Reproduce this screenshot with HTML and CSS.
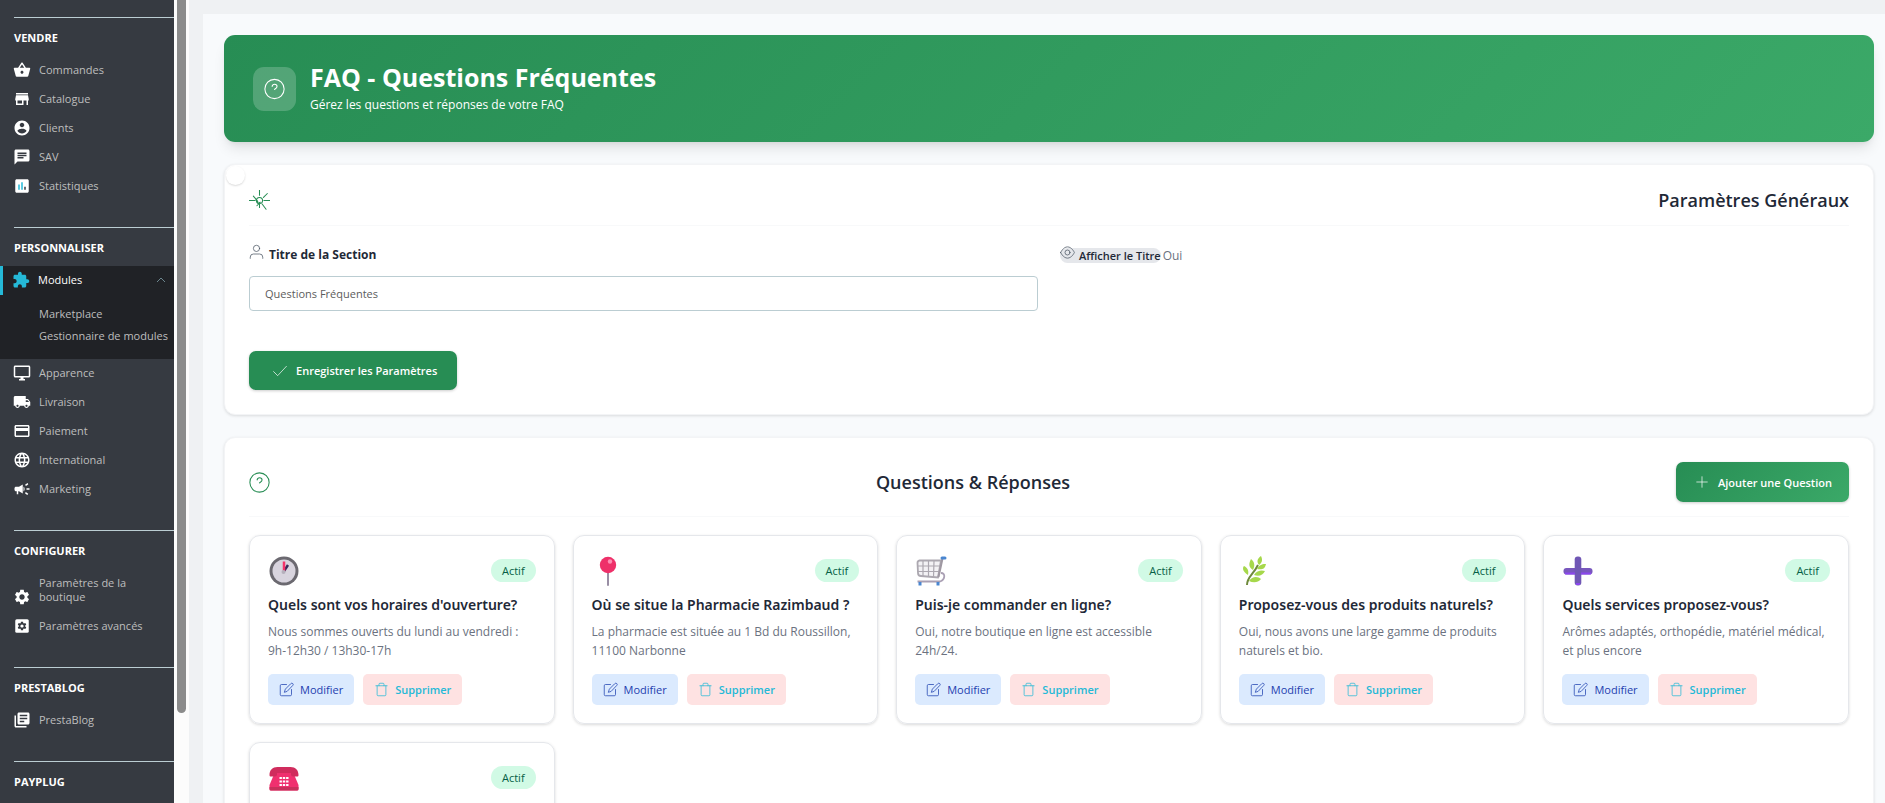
FILE: index.html
```html
<!DOCTYPE html>
<html lang="fr">
<head>
  <meta charset="UTF-8">
  <meta name="viewport" content="width=device-width, initial-scale=1.0">
  <title>FAQ - Questions Fréquentes</title>
  <link rel="stylesheet" href="styles.css">
</head>
<body>
  <!-- Shared icons -->
  <svg class="sprite" aria-hidden="true">
    <symbol id="i-help" viewBox="0 0 24 24">
      <circle cx="12" cy="12" r="11"/>
      <path d="M9.3 9c.2-1.6 1.3-2.5 2.8-2.5 1.600 0 2.800 1 2.800 2.500 0 1.700-1.400 2.400-2.900 3.500"/>
    </symbol>
    <symbol id="i-edit" viewBox="0 0 24 24">
      <path d="M12 4H4a2 2 0 0 0-2 2v14a2 2 0 0 0 2 2h14a2 2 0 0 0 2-2v-8"/>
      <path d="M19 2.500a2.100 2.100 0 0 1 3 3L13 15l-4.500 1.500L10 12z"/>
    </symbol>
    <symbol id="i-trash" viewBox="0 0 24 24">
      <path d="M3 6h18M5 6v14.500a1.500 1.500 0 0 0 1.500 1.500h11a1.500 1.500 0 0 0 1.500-1.500V6M8 6V3.500A1.500 1.500 0 0 1 9.500 2h5A1.500 1.500 0 0 1 16 3.500V6"/>
    </symbol>
  </svg>

  <div class="layout">
    <nav class="sidebar">
      <section class="nav-group">
        <h2>Vendre</h2>
        <ul>
          <li><a href="#"><svg viewBox="0 0 24 24"><path d="M17.21 9l-4.380-6.560c-.19-.28-.51-.42-.83-.42-.32 0-.64.14-.83.43L6.790 9H2c-.55 0-1 .45-1 1 0 .09.01.18.04.27l2.540 9.270c.23.84 1 1.460 1.920 1.460h13c.92 0 1.690-.62 1.930-1.460l2.540-9.270L23 10c0-.55-.45-1-1-1h-4.790zM9 9l3-4.400L15 9H9zm3 8c-1.100 0-2-.9-2-2s.9-2 2-2 2 .9 2 2-.9 2-2 2z"/></svg>Commandes</a></li>
          <li><a href="#"><svg viewBox="0 0 24 24"><path d="M20 4H4v2h16V4zm1 10v-2l-1-5H4l-1 5v2h1v6h10v-6h4v6h2v-6h1zm-9 4H6v-4h6v4z"/></svg>Catalogue</a></li>
          <li><a href="#"><svg viewBox="0 0 24 24"><path d="M12 2C6.480 2 2 6.480 2 12s4.480 10 10 10 10-4.480 10-10S17.520 2 12 2zm0 3c1.660 0 3 1.340 3 3s-1.340 3-3 3-3-1.340-3-3 1.340-3 3-3zm0 14.200c-2.500 0-4.710-1.280-6-3.220.03-1.990 4-3.080 6-3.080 1.990 0 5.970 1.090 6 3.080-1.290 1.940-3.500 3.220-6 3.220z"/></svg>Clients</a></li>
          <li><a href="#"><svg viewBox="0 0 24 24"><path d="M20 2H4c-1.100 0-1.990.9-1.990 2L2 22l4-4h14c1.100 0 2-.9 2-2V4c0-1.100-.9-2-2-2zM6 9h12v2H6V9zm8 5H6v-2h8v2zm4-6H6V6h12v2z"/></svg>SAV</a></li>
          <li><a href="#"><svg viewBox="0 0 24 24"><path d="M19 3H5c-1.100 0-2 .9-2 2v14c0 1.100.9 2 2 2h14c1.100 0 2-.9 2-2V5c0-1.100-.9-2-2-2z"/><path fill="#25b9d7" d="M7 10h2v7H7zM11 7h2v10h-2z"/><path fill="#363a41" d="M15 13h2v4h-2z"/></svg>Statistiques</a></li>
        </ul>
      </section>

      <section class="nav-group">
        <h2>Personnaliser</h2>
        <ul>
          <li class="active">
            <a href="#"><svg viewBox="0 0 24 24"><path d="M20.500 11H19V7c0-1.100-.9-2-2-2h-4V3.500C13 2.120 11.880 1 10.500 1S8 2.120 8 3.500V5H4c-1.100 0-1.990.9-1.990 2v3.800H3.500c1.490 0 2.700 1.210 2.700 2.700s-1.210 2.700-2.700 2.700H2V20c0 1.100.9 2 2 2h3.800v-1.500c0-1.490 1.210-2.700 2.700-2.700 1.490 0 2.700 1.210 2.700 2.700V22H17c1.100 0 2-.9 2-2v-4h1.500c1.380 0 2.500-1.120 2.500-2.500S21.880 11 20.500 11z"/></svg>Modules<svg class="chevron" viewBox="0 0 10 10"><path d="M1 7l4-4 4 4"/></svg></a>
            <ul class="submenu">
              <li><a href="#">Marketplace</a></li>
              <li><a href="#">Gestionnaire de modules</a></li>
            </ul>
          </li>
          <li><a href="#"><svg viewBox="0 0 24 24"><path d="M21 2H3c-1.100 0-2 .9-2 2v12c0 1.100.9 2 2 2h7v2H8v2h8v-2h-2v-2h7c1.100 0 2-.9 2-2V4c0-1.100-.9-2-2-2zm0 14H3V4h18v12z"/></svg>Apparence</a></li>
          <li><a href="#"><svg viewBox="0 0 24 24"><path d="M20 8h-3V4H3c-1.100 0-2 .9-2 2v11h2c0 1.660 1.340 3 3 3s3-1.340 3-3h6c0 1.660 1.340 3 3 3s3-1.340 3-3h2v-5l-3-4zM6 18.500c-.83 0-1.500-.67-1.500-1.500s.67-1.500 1.500-1.500 1.500.67 1.500 1.500-.67 1.500-1.500 1.500zm13.500-9l1.960 2.500H17V9.500h2.500zm-1.500 9c-.83 0-1.500-.67-1.500-1.500s.67-1.500 1.500-1.500 1.500.67 1.500 1.500-.67 1.500-1.500 1.500z"/></svg>Livraison</a></li>
          <li><a href="#"><svg viewBox="0 0 24 24"><path d="M20 4H4c-1.110 0-1.990.89-1.990 2L2 18c0 1.110.89 2 2 2h16c1.110 0 2-.89 2-2V6c0-1.110-.89-2-2-2zm0 14H4v-6h16v6zm0-10H4V6h16v2z"/></svg>Paiement</a></li>
          <li><a href="#"><svg viewBox="0 0 24 24"><path d="M11.990 2C6.470 2 2 6.480 2 12s4.470 10 9.990 10C17.520 22 22 17.520 22 12S17.520 2 11.990 2zm6.930 6h-2.950c-.32-1.250-.78-2.450-1.380-3.560 1.840.63 3.370 1.910 4.330 3.560zM12 4.040c.83 1.200 1.480 2.530 1.910 3.960h-3.820c.43-1.430 1.080-2.760 1.910-3.960zM4.260 14C4.100 13.360 4 12.690 4 12s.1-1.360.26-2h3.380c-.08.66-.14 1.320-.14 2 0 .68.06 1.340.14 2H4.260zm.82 2h2.950c.32 1.250.78 2.450 1.380 3.560-1.840-.63-3.370-1.900-4.330-3.560zm2.950-8H5.080c.96-1.660 2.490-2.930 4.330-3.560C8.810 5.550 8.350 6.750 8.030 8zM12 19.960c-.83-1.200-1.480-2.530-1.910-3.960h3.820c-.43 1.430-1.080 2.760-1.910 3.960zM14.340 14H9.660c-.09-.66-.16-1.320-.16-2 0-.68.07-1.350.16-2h4.680c.09.65.16 1.320.16 2 0 .68-.07 1.340-.16 2zm.25 5.560c.6-1.110 1.060-2.310 1.380-3.560h2.950c-.96 1.650-2.490 2.930-4.330 3.560zM16.360 14c.08-.66.14-1.320.14-2 0-.68-.06-1.340-.14-2h3.380c.16.64.26 1.310.26 2s-.1 1.360-.26 2h-3.380z"/></svg>International</a></li>
          <li><a href="#"><svg viewBox="0 0 24 24"><path d="M18 11v2h4v-2h-4zm-2 6.610c.96.71 2.210 1.650 3.200 2.390.4-.53.8-1.070 1.200-1.600-.99-.74-2.240-1.680-3.200-2.400-.4.54-.8 1.080-1.200 1.610zM20.400 5.600c-.4-.53-.8-1.070-1.200-1.600-.99.74-2.240 1.680-3.200 2.400.4.53.8 1.070 1.200 1.600.96-.72 2.210-1.650 3.200-2.400zM4 9c-1.100 0-2 .9-2 2v2c0 1.100.9 2 2 2h1v4h2v-4h1l5 3V6L8 9H4zm11.500 3c0-1.330-.58-2.530-1.500-3.350v6.690c.92-.81 1.500-2.010 1.500-3.340z"/></svg>Marketing</a></li>
        </ul>
      </section>

      <section class="nav-group">
        <h2>Configurer</h2>
        <ul>
          <li><a href="#"><svg viewBox="0 0 24 24"><path id="gear" d="M19.140 12.940c.04-.3.06-.61.06-.94 0-.32-.02-.64-.07-.94l2.030-1.580c.18-.14.23-.41.12-.61l-1.920-3.320c-.12-.22-.37-.29-.59-.22l-2.390.96c-.5-.38-1.030-.7-1.620-.94l-.36-2.540c-.04-.24-.24-.41-.48-.41h-3.840c-.24 0-.43.17-.47.41l-.36 2.540c-.59.24-1.130.57-1.620.94l-2.390-.96c-.22-.08-.47 0-.59.22L2.740 8.870c-.12.21-.08.47.12.61l2.030 1.580c-.05.3-.09.63-.09.94s.02.64.07.94l-2.030 1.580c-.18.14-.23.41-.12.61l1.920 3.320c.12.22.37.29.59.22l2.390-.96c.5.38 1.030.7 1.620.94l.36 2.540c.05.24.24.41.48.41h3.840c.24 0 .44-.17.47-.41l.36-2.540c.59-.24 1.130-.56 1.620-.94l2.390.96c.22.08.47 0 .59-.22l1.920-3.320c.12-.22.07-.47-.12-.61l-2.010-1.580zM12 15.600c-1.980 0-3.600-1.620-3.600-3.600s1.620-3.600 3.600-3.600 3.600 1.620 3.600 3.600-1.620 3.600-3.600 3.600z"/></svg><span>Paramètres de la boutique</span></a></li>
          <li><a href="#"><svg viewBox="0 0 24 24"><rect x="3" y="3" width="18" height="18" rx="2"/><use href="#gear" fill="#363a41" transform="translate(4.800 4.800) scale(.6)"/></svg>Paramètres avancés</a></li>
        </ul>
      </section>

      <section class="nav-group">
        <h2>PrestaBlog</h2>
        <ul>
          <li><a href="#"><svg viewBox="0 0 24 24"><path d="M4 6H2v14c0 1.100.9 2 2 2h14v-2H4V6zm16-4H8c-1.100 0-2 .9-2 2v12c0 1.100.9 2 2 2h12c1.100 0 2-.9 2-2V4c0-1.100-.9-2-2-2zm-1 9H9V9h10v2zm-4 4H9v-2h6v2zm4-8H9V5h10v2z"/></svg>PrestaBlog</a></li>
        </ul>
      </section>

      <section class="nav-group">
        <h2>PayPlug</h2>
      </section>
    </nav>
    <div class="scrollbar"><div class="scrollbar-thumb"></div></div>

    <main class="content">
      <div class="panel">
        <header class="hero">
          <div class="hero-icon"><svg class="line-icon"><use href="#i-help"/></svg></div>
          <div>
            <h1>FAQ - Questions Fréquentes</h1>
            <p>Gérez les questions et réponses de votre FAQ</p>
          </div>
        </header>

        <section class="card">
          <span class="card-dot"></span>
          <div class="card-header">
            <svg class="line-icon" viewBox="0 0 24 24"><circle cx="12" cy="12" r="3.500"/><path d="M12 0v6M12 15v5M0 12h7M17 12h7M21 4l-4.500 4.500M5 7l5 6M15 16l4.500 6M9 18l4-4M8 11l2 4 3-1"/></svg>
            <h2>Paramètres Généraux</h2>
          </div>
          <form>
            <div class="form-row">
              <div class="form-group">
                <label for="sectionTitle"><svg class="line-icon" viewBox="0 0 24 24"><circle cx="12" cy="7" r="5"/><path d="M2 23v-2a5 5 0 0 1 5-5h10a5 5 0 0 1 5 5v2"/></svg>Titre de la Section</label>
                <input type="text" id="sectionTitle" value="Questions Fréquentes">
              </div>
              <div class="toggle-group">
                <span class="toggle-label"><svg class="line-icon" viewBox="0 0 24 24"><path d="M1 12s4-9 11-9 11 9 11 9-4 9-11 9S1 12 1 12z"/><circle cx="12" cy="12" r="4"/></svg>Afficher le Titre</span>
                <span>Oui</span>
              </div>
            </div>
            <button type="submit" class="btn btn-save"><svg class="line-icon" viewBox="0 0 24 24"><path d="M23 4L8 20l-7-7"/></svg>Enregistrer les Paramètres</button>
          </form>
        </section>

        <section class="card">
          <div class="card-header">
            <svg class="line-icon"><use href="#i-help"/></svg>
            <h2>Questions &amp; Réponses</h2>
            <button type="button" class="btn btn-add"><svg class="line-icon" viewBox="0 0 24 24"><path d="M12 3v18M3 12h18"/></svg>Ajouter une Question</button>
          </div>

          <div class="faq-grid">
            <article class="faq-card">
              <div class="faq-top">
                <svg class="emoji" viewBox="0 0 32 32"><circle cx="16" cy="16" r="14.500" fill="#6b6970"/><circle cx="16" cy="16" r="11.500" fill="#d8d4de"/><path d="M16 16l4-6" stroke="#3a2a5c" stroke-width="2.500"/><path d="M16 16V6.500" stroke="#f5336b" stroke-width="2.500"/><circle cx="15.500" cy="17" r="2" fill="#b5b0bc"/></svg>
                <span class="badge">Actif</span>
              </div>
              <h3>Quels sont vos horaires d'ouverture?</h3>
              <p>Nous sommes ouverts du lundi au vendredi : 9h-12h30 / 13h30-17h</p>
              <div class="faq-actions">
                <button type="button" class="btn-edit"><svg class="line-icon"><use href="#i-edit"/></svg>Modifier</button>
                <a href="#" class="btn-delete"><svg class="line-icon"><use href="#i-trash"/></svg>Supprimer</a>
              </div>
            </article>

            <article class="faq-card">
              <div class="faq-top">
                <svg class="emoji" viewBox="0 0 32 32"><path d="M16 16v14" stroke="#998ea4" stroke-width="2" stroke-linecap="round"/><circle cx="16" cy="10" r="8.200" fill="#ee3069"/><circle cx="18" cy="6.500" r="2.200" fill="#ff8db3"/></svg>
                <span class="badge">Actif</span>
              </div>
              <h3>Où se situe la Pharmacie Razimbaud ?</h3>
              <p>La pharmacie est située au 1 Bd du Roussillon, 11100 Narbonne</p>
              <div class="faq-actions">
                <button type="button" class="btn-edit"><svg class="line-icon"><use href="#i-edit"/></svg>Modifier</button>
                <a href="#" class="btn-delete"><svg class="line-icon"><use href="#i-trash"/></svg>Supprimer</a>
              </div>
            </article>

            <article class="faq-card">
              <div class="faq-top">
                <svg class="emoji" viewBox="0 0 32 32" fill="none"><path d="M4.500 5.500H26l-3 17-17-1.500a3 3 0 0 1-3-3L2.500 8a2.500 2.500 0 0 1 2-2.500z" fill="#f3f2f5" stroke="#aca8b0" stroke-width="1.800"/><path d="M8 6v15M13.500 6v15M19 6l-.5 16M3 11h22M3 16.500h21" stroke="#aca8b0" stroke-width="1.200"/><path d="M27.500 3.500L23.500 22" stroke="#9f98a2" stroke-width="2"/><path d="M26 18c5 0 4 7-1 8.500H2.500" stroke="#aaa0b4" stroke-width="1.800"/><path d="M27 3h3" stroke="#4a86d0" stroke-width="3" stroke-linecap="round"/><path d="M5 27v3.500M23 27v3.500" stroke="#4a86d0" stroke-width="3"/></svg>
                <span class="badge">Actif</span>
              </div>
              <h3>Puis-je commander en ligne?</h3>
              <p>Oui, notre boutique en ligne est accessible 24h/24.</p>
              <div class="faq-actions">
                <button type="button" class="btn-edit"><svg class="line-icon"><use href="#i-edit"/></svg>Modifier</button>
                <a href="#" class="btn-delete"><svg class="line-icon"><use href="#i-trash"/></svg>Supprimer</a>
              </div>
            </article>

            <article class="faq-card">
              <div class="faq-top">
                <svg class="emoji" viewBox="0 0 32 32"><path d="M8 30c0-8 6-10 11-20" fill="none" stroke="#6f8a3c" stroke-width="2"/><g fill="#a6d84b"><path d="M20 10c-3-4-1-7 2-9 2 4 1 7-2 9zM14 15c-5-3-4-7-2-11 4 3 4 7 2 11zM9 20c-5-3-6-7-4-9 4 2 5 5 4 9zM18 14c3-5 6-5 9-5-1 5-4 6-9 5zM15 20c3-5 8-5 11-4-2 4-6 6-11 4zM10 26c3-5 9-5 12-2-3 4-8 4-12 2z"/></g></svg>
                <span class="badge">Actif</span>
              </div>
              <h3>Proposez-vous des produits naturels?</h3>
              <p>Oui, nous avons une large gamme de produits naturels et bio.</p>
              <div class="faq-actions">
                <button type="button" class="btn-edit"><svg class="line-icon"><use href="#i-edit"/></svg>Modifier</button>
                <a href="#" class="btn-delete"><svg class="line-icon"><use href="#i-trash"/></svg>Supprimer</a>
              </div>
            </article>

            <article class="faq-card">
              <div class="faq-top">
                <svg class="emoji" viewBox="0 0 32 32"><rect x="1.500" y="13" width="29" height="6.500" rx="3" fill="#7857bd"/><rect x="12.700" y="1.500" width="6.600" height="29" rx="3" fill="#7057b5"/><path d="M3 18.500h10M19 18.500h10M14 29h4" stroke="#8b46ee" stroke-width="2"/></svg>
                <span class="badge">Actif</span>
              </div>
              <h3>Quels services proposez-vous?</h3>
              <p>Arômes adaptés, orthopédie, matériel médical, et plus encore</p>
              <div class="faq-actions">
                <button type="button" class="btn-edit"><svg class="line-icon"><use href="#i-edit"/></svg>Modifier</button>
                <a href="#" class="btn-delete"><svg class="line-icon"><use href="#i-trash"/></svg>Supprimer</a>
              </div>
            </article>

            <article class="faq-card">
              <div class="faq-top">
                <svg class="emoji" viewBox="0 0 32 32"><path d="M7 10h18l5.500 13v4a1.500 1.500 0 0 1-1.500 1.500H3A1.500 1.500 0 0 1 1.500 27v-4z" fill="#f0306f"/><path d="M1.500 25h29v2a1.500 1.500 0 0 1-1.500 1.500H3A1.500 1.500 0 0 1 1.500 27z" fill="#c9305c"/><path d="M1.500 13c0-5 3-8 8-8h13c5 0 8 3 8 8 0 1-.5 1.500-1.500 1.500h-4c-1 0-2-1-2-2V11H9v1.500c0 1-1 2-2 2H3c-1 0-1.500-.5-1.500-1.500z" fill="#d02c5d"/><path d="M11.500 16h9M11.500 19.500h9M11.500 23h9" stroke="#fff" stroke-width="2" stroke-dasharray="2.400 .9"/></svg>
                <span class="badge">Actif</span>
              </div>
            </article>
          </div>
        </section>
      </div>
    </main>
  </div>
</body>
</html>
```

FILE: styles.css
```css
* {
  box-sizing: border-box;
}
body {
  margin: 0;
  font-family: 'Open Sans', 'Noto Sans', sans-serif;
  font-size: 12px;
  line-height: 19px;
  color: #6b7280;
  background-color: #eff1f3;
}
h1, h2, h3, p, ul {
  margin: 0;
  padding: 0;
}
ul {
  list-style: none;
}
a {
  text-decoration: none;
}
.sprite {
  display: none;
}
.line-icon {
  fill: none;
  stroke: currentColor;
  stroke-width: 1.2;
  stroke-linecap: round;
  stroke-linejoin: round;
  flex-shrink: 0;
}
.layout {
  display: flex;
  height: 100vh;
  overflow: hidden;
}

/* Sidebar */
.sidebar {
  width: 174px;
  flex-shrink: 0;
  padding-top: 17px;
  background-color: #363a41;
  overflow: hidden;
}
.nav-group {
  margin-bottom: 26px;
}
.nav-group h2 {
  margin-left: 14px;
  padding: 12px 0 10px;
  border-top: 1px solid #bbcdd2;
  font-size: 11px;
  line-height: 16px;
  font-weight: 700;
  text-transform: uppercase;
  color: #ffffff;
}
.nav-group a {
  display: flex;
  align-items: flex-end;
  gap: 8px;
  padding: 7px 14px 8px 13px;
  font-size: 11px;
  line-height: 14px;
  color: #bebebe;
}
.nav-group a svg {
  width: 18px;
  height: 18px;
  margin: -2px 0;
  flex-shrink: 0;
  fill: #ffffff;
}
.nav-group .active {
  background-color: #202226;
}
.nav-group .active > a {
  border-left: 3px solid #25b9d7;
  padding: 7px 8px 8px 9px;
  color: #ffffff;
  font-weight: 500;
}
.nav-group .active > a svg {
  fill: #25b9d7;
}
.nav-group .active > a .chevron {
  width: 10px;
  height: 10px;
  margin: 2px 0 2px auto;
  fill: none;
  stroke: #6c868e;
}
.nav-group .submenu {
  padding: 8px 0 12px;
}
.nav-group .submenu a {
  padding: 4px 0 4px 39px;
  white-space: nowrap;
}
.scrollbar {
  width: 15px;
  flex-shrink: 0;
  padding: 0 3px;
  background-color: #fcfcfc;
}
.scrollbar-thumb {
  height: 713px;
  border-radius: 0 0 5px 5px;
  background-color: #8b8b8b;
}

/* Content */
.content {
  flex: 1;
  min-width: 0;
  padding: 14px 0 0 14px;
}
.panel {
  display: flex;
  flex-direction: column;
  gap: 22px;
  padding: 21px 11px 21px 21px;
  background-color: #f8fafc;
}
.hero {
  display: flex;
  align-items: center;
  gap: 14px;
  padding: 28px 29px;
  border-radius: 11px;
  color: #ffffff;
  background: linear-gradient(135deg, #278d54, #3ba968);
  box-shadow: 0 9px 14px -3px rgba(0, 0, 0, 0.1), 0 4px 6px -4px rgba(0, 0, 0, 0.1);
}
.hero-icon {
  display: flex;
  padding: 11px;
  border-radius: 11px;
  background-color: rgba(255, 255, 255, 0.2);
}
.hero-icon svg {
  width: 21px;
  height: 22px;
}
.hero h1 {
  margin-bottom: 4px;
  font-size: 25px;
  line-height: 28px;
  font-weight: 700;
}
.card {
  position: relative;
  padding: 24px;
  border: 1px solid #f3f4f6;
  border-radius: 11px;
  background-color: #ffffff;
  box-shadow: 0 1px 3px rgba(0, 0, 0, 0.12);
}
.card-dot {
  position: absolute;
  top: 1px;
  left: 1px;
  width: 19px;
  height: 19px;
  border-radius: 50%;
  box-shadow: 0 1px 2px rgba(0, 0, 0, 0.15);
}
.card-header {
  display: flex;
  justify-content: space-between;
  align-items: center;
  margin-bottom: 18px;
  padding-bottom: 14px;
  border-bottom: 1px solid #f8f9fa;
}
.card-header > svg {
  width: 21px;
  height: 21px;
  color: #278d54;
}
.card-header h2 {
  font-size: 18px;
  line-height: 22px;
  font-weight: 600;
  color: #1f2937;
}

/* Form */
.form-row {
  display: grid;
  grid-template-columns: 1fr 1fr;
  gap: 22px;
  margin-bottom: 40px;
}
.form-group label {
  display: flex;
  align-items: center;
  gap: 5px;
  margin-bottom: 10px;
  font-weight: 700;
  line-height: 22px;
  color: #1f2937;
}
.form-group label svg,
.toggle-label svg {
  width: 15px;
  height: 15px;
  color: #4b5563;
}
.form-group label svg {
  align-self: flex-start;
}
.form-group input {
  width: 100%;
  height: 35px;
  padding: 0 15px;
  border: 1px solid #bbcdd2;
  border-radius: 4px;
  font-family: inherit;
  font-size: 11px;
  color: #5c5c5c;
}
.toggle-group {
  display: flex;
  align-items: center;
  align-self: start;
  gap: 2px;
  height: 22px;
}
.toggle-label {
  display: flex;
  align-items: center;
  gap: 4px;
  height: 15px;
  border-radius: 8px;
  font-size: 11px;
  font-weight: 600;
  color: #1f2937;
  background-color: #e5e7eb;
}
.toggle-label svg {
  margin-bottom: 6px;
}
.btn {
  display: inline-flex;
  align-items: center;
  gap: 9px;
  height: 39px;
  padding: 0 20px 0 24px;
  border: none;
  border-radius: 7px;
  font-family: inherit;
  font-size: 11px;
  font-weight: 600;
  color: #ffffff;
  cursor: pointer;
  box-shadow: 0 1px 3px rgba(0, 0, 0, 0.2);
}
.btn svg {
  width: 14px;
  height: 14px;
}
.btn-save {
  background-color: #278d54;
}
.btn-add {
  height: 40px;
  padding: 0 17px 0 19px;
  background: linear-gradient(135deg, #278d54, #3ba968);
}

/* Questions */
.faq-grid {
  display: grid;
  grid-template-columns: repeat(auto-fill, minmax(280px, 1fr));
  gap: 18px;
}
.faq-card {
  min-height: 189px;
  padding: 18px;
  border: 1px solid #e5e7eb;
  border-radius: 11px;
  box-shadow: 0 1px 3px rgba(0, 0, 0, 0.15);
}
.faq-top {
  display: flex;
  justify-content: space-between;
  align-items: center;
  height: 33px;
  margin-bottom: 8px;
}
.emoji {
  width: 32px;
  height: 32px;
}
.badge {
  padding: 3px 11px;
  border-radius: 12px;
  font-size: 11px;
  line-height: 17px;
  font-weight: 500;
  color: #065f46;
  background-color: #d1fae5;
}
.faq-card h3 {
  margin-bottom: 7px;
  font-family: 'Noto Sans', 'Open Sans', sans-serif;
  font-size: 14px;
  line-height: 20px;
  font-weight: 600;
  color: #1f2937;
}
.faq-card p {
  margin-bottom: 14px;
}
.faq-actions {
  display: flex;
  gap: 9px;
}
.btn-edit,
.btn-delete {
  display: flex;
  align-items: center;
  gap: 6px;
  height: 31px;
  padding: 0 11px;
  border: none;
  border-radius: 5px;
  font-family: inherit;
  font-size: 11px;
  cursor: pointer;
}
.btn-edit svg,
.btn-delete svg {
  width: 15px;
  height: 15px;
}
.btn-edit {
  color: #1e40af;
  background-color: #dbeafe;
}
.btn-delete {
  color: #25b9d7;
  font-weight: 600;
  background-color: #fee2e2;
}
```
